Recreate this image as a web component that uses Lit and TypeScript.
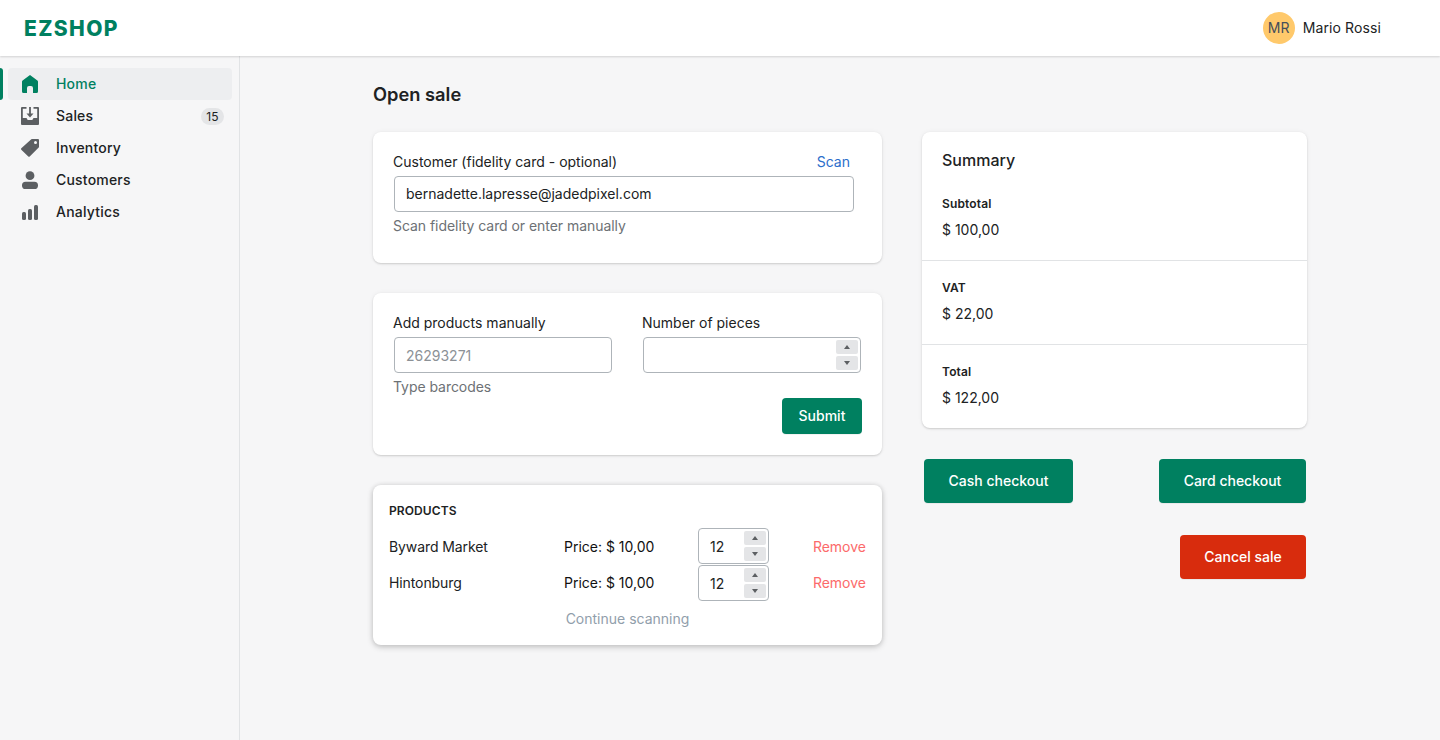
import { LitElement, css, html, svg } from "lit";
import { customElement } from "lit/decorators.js";

const NAV = [
  {
    label: "Home",
    active: true,
    icon: svg`<path d="M10 1 2.6 6.5A1.5 1.5 0 0 0 2 7.7v9.8A1.5 1.5 0 0 0 3.5 19H7v-5a2 2 0 0 1 2-2h2a2 2 0 0 1 2 2v5h3.5a1.5 1.5 0 0 0 1.5-1.5V7.7a1.5 1.5 0 0 0-.6-1.2L10 1z"/>`,
  },
  {
    label: "Sales",
    badge: "15",
    icon: svg`<path d="M2 1h4.5v1.8H2.8V12h3.7l1.2 2h4.6l1.2-2h3.7V2.800h-3.700V1H18a1 1 0 0 1 1 1v16a1 1 0 0 1-1 1H2a1 1 0 0 1-1-1V2a1 1 0 0 1 1-1z"/><path d="M9.100 1h1.800v6.500h2.600L10 11.500 6.500 7.500h2.600V1z"/>`,
  },
  {
    label: "Inventory",
    icon: svg`<path fill-rule="evenodd" d="M18 1h-6a1 1 0 0 0-.7.3l-10 9a1 1 0 0 0 0 1.4l7 6.7a1 1 0 0 0 1.400 0l9-9a1 1 0 0 0 .3-.7V2a1 1 0 0 0-1-1zm-2.500 5a1.500 1.500 0 1 1 0-3 1.500 1.500 0 0 1 0 3z"/>`,
  },
  {
    label: "Customers",
    icon: svg`<circle cx="10" cy="5.7" r="4.4"/><rect x="2" y="11.7" width="16" height="7.3" rx="3.6"/>`,
  },
  {
    label: "Analytics",
    icon: svg`<rect x="2" y="10" width="4" height="8" rx="1.5"/><rect x="8" y="7" width="4" height="11" rx="1.5"/><rect x="14" y="3" width="4" height="15" rx="1.5"/>`,
  },
];

const PRODUCTS = [
  { name: "Byward Market", price: "Price: $ 10,00", qty: "12" },
  { name: "Hintonburg", price: "Price: $ 10,00", qty: "12" },
];

const SUMMARY = [
  { label: "Subtotal", value: "$ 100,00" },
  { label: "VAT", value: "$ 22,00" },
  { label: "Total", value: "$ 122,00" },
];

@customElement("app-root")
class AppRoot extends LitElement {
  static styles = css`
    :host {
      display: block;
      height: 740px;
      overflow: hidden;
      background: #f6f6f7;
      color: #202223;
      font-family: Inter, "Liberation Sans", sans-serif;
      font-size: 14px;
      line-height: 20px;
    }
    * {
      box-sizing: border-box;
    }
    .topbar {
      position: relative;
      z-index: 1;
      height: 56px;
      display: flex;
      align-items: center;
      justify-content: space-between;
      padding: 0 59px 0 24px;
      background: #fff;
      box-shadow: 0 1px 2px rgba(0, 0, 0, 0.15);
    }
    .logo {
      padding-top: 2px;
      color: #008060;
      font-size: 21px;
      font-weight: 800;
      letter-spacing: 1.4px;
    }
    .user {
      display: flex;
      align-items: center;
      gap: 8px;
      letter-spacing: 0.1px;
    }
    .avatar {
      width: 32px;
      height: 32px;
      border-radius: 50%;
      background: #ffc96b;
      display: flex;
      align-items: center;
      justify-content: center;
      color: #454f5b;
    }
    .body {
      display: flex;
      height: 684px;
    }
    .sidebar {
      width: 240px;
      flex: none;
      padding: 12px 7px 12px 8px;
      border-right: 1px solid #e1e3e5;
    }
    .nav-item {
      position: relative;
      height: 32px;
      display: flex;
      align-items: center;
      gap: 16px;
      padding: 0 8px 0 12px;
      border-radius: 4px;
      font-weight: 500;
      letter-spacing: 0.2px;
    }
    .nav-item svg {
      width: 20px;
      height: 20px;
      fill: #5c5f62;
      flex: none;
    }
    .nav-item.active {
      background: #edeef0;
      color: #008060;
    }
    .nav-item.active svg {
      fill: #008060;
    }
    .nav-item.active::before {
      content: "";
      position: absolute;
      left: -8px;
      top: 0;
      bottom: 0;
      width: 3px;
      background: #008060;
      border-radius: 0 3px 3px 0;
    }
    .badge {
      margin-left: auto;
      height: 17px;
      padding: 0 5.5px;
      border-radius: 9px;
      background: #e4e5e7;
      font-size: 12px;
      font-weight: 400;
      line-height: 17px;
      letter-spacing: 0;
    }
    .main {
      flex: 1;
      padding: 24px 0 0 133px;
    }
    h1 {
      margin: 0 0 24px;
      font-size: 18.3px;
      font-weight: 600;
      line-height: 28px;
    }
    .columns {
      display: flex;
      gap: 40px;
      align-items: flex-start;
    }
    .left {
      width: 509px;
      display: flex;
      flex-direction: column;
      gap: 30px;
    }
    .right {
      width: 385px;
    }
    .card {
      background: #fff;
      border-radius: 8px;
      box-shadow: 0 0 5px rgba(23, 24, 24, 0.05), 0 1px 2px rgba(0, 0, 0, 0.15);
    }
    .customer {
      height: 131px;
      padding: 20px 28px 0 20px;
    }
    .customer input {
      padding-bottom: 2px;
    }
    .label-row {
      display: flex;
      justify-content: space-between;
      padding-right: 4px;
    }
    .scan {
      color: #2c6ecb;
    }
    .control {
      position: relative;
      display: block;
      margin: 4px 0 0 1px;
    }
    input {
      display: block;
      width: 100%;
      height: 36px;
      padding: 0 11px;
      border: 1px solid #aeb4b9;
      border-radius: 4px;
      background: #fff;
      color: #202223;
      font: inherit;
      outline: none;
    }
    input::placeholder {
      color: #8c9196;
    }
    .help {
      margin-top: 4px;
      color: #6d7175;
      letter-spacing: -0.05px;
    }
    .spin {
      position: absolute;
      top: 3px;
      right: 3px;
      width: 22px;
      display: flex;
      flex-direction: column;
      gap: 2px;
    }
    .spin span {
      height: 14px;
      display: flex;
      align-items: center;
      justify-content: center;
      background: #e4e5e7;
      border-radius: 2px;
    }
    .spin i {
      width: 0;
      height: 0;
      border-left: 3.5px solid transparent;
      border-right: 3.5px solid transparent;
    }
    .spin .up i {
      border-bottom: 4px solid #5c5f62;
    }
    .spin .down i {
      border-top: 4px solid #5c5f62;
    }
    .manual {
      height: 162px;
      padding: 20px 20px 0;
    }
    .fields {
      display: grid;
      grid-template-columns: 219px 219px;
      gap: 30px;
    }
    .submit-row {
      display: flex;
      justify-content: flex-end;
      margin-top: 1px;
    }
    button {
      border: 0;
      border-radius: 4px;
      background: #008060;
      color: #fff;
      font: inherit;
      font-weight: 450;
      box-shadow: 0 1px 0 rgba(0, 0, 0, 0.05);
    }
    .submit {
      width: 80px;
      height: 36px;
    }
    .products {
      height: 160px;
      padding: 17px 16px 16px;
      box-shadow: 0 0 5px rgba(23, 24, 24, 0.08), 0 2px 6px rgba(0, 0, 0, 0.2);
    }
    .products h2 {
      margin: 0 0 8px;
      font-size: 12px;
      font-weight: 600;
      line-height: 18px;
      letter-spacing: 0.1px;
    }
    .rows {
      display: flex;
      flex-direction: column;
      gap: 1px;
    }
    .row {
      display: grid;
      grid-template-columns: 175px 134px 71px 1fr;
      align-items: center;
      height: 36px;
    }
    .row:first-child > span {
      margin-top: 2px;
    }
    .row .control {
      margin: 0;
    }
    .name {
      letter-spacing: -0.1px;
    }
    .price {
      color: #111;
    }
    .remove {
      color: #fc6a6a;
      text-align: right;
    }
    .continue {
      margin-top: 8px;
      color: #919eab;
      text-align: center;
    }
    .summary h2 {
      margin: 0;
      padding: 16px 20px 4px;
      font-size: 16px;
      font-weight: 500;
      line-height: 24px;
    }
    .section {
      height: 84px;
      padding: 20px 20px 0;
    }
    .section + .section {
      padding-top: 19px;
      border-top: 1px solid #e1e3e5;
    }
    .section h3 {
      margin: 0 0 8px;
      font-size: 12px;
      font-weight: 600;
      line-height: 16px;
      letter-spacing: 0.15px;
    }
    .checkout {
      display: flex;
      justify-content: space-between;
      margin-top: 31px;
      padding: 0 1px 0 2px;
    }
    .checkout button,
    .cancel-row button {
      height: 44px;
    }
    .cash {
      width: 149px;
    }
    .card-pay {
      width: 147px;
    }
    .cancel-row {
      display: flex;
      justify-content: flex-end;
      margin-top: 32px;
      padding-right: 1px;
    }
    .cancel {
      width: 126px;
      background: #d82c0d;
    }
  `;

  renderNumber(value: string) {
    return html`<label class="control">
      <input .value=${value} />
      <div class="spin">
        <span class="up"><i></i></span>
        <span class="down"><i></i></span>
      </div>
    </label>`;
  }

  render() {
    return html`
      <header class="topbar">
        <div class="logo">EZSHOP</div>
        <div class="user">
          <div class="avatar">MR</div>
          <span>Mario Rossi</span>
        </div>
      </header>
      <div class="body">
        <nav class="sidebar">
          ${NAV.map(
            (item) => html`
              <div class="nav-item ${item.active ? "active" : ""}">
                <svg viewBox="0 0 20 20">${item.icon}</svg>
                <span>${item.label}</span>
                ${item.badge ? html`<span class="badge">${item.badge}</span>` : ""}
              </div>
            `
          )}
        </nav>
        <main class="main">
          <h1>Open sale</h1>
          <div class="columns">
            <div class="left">
              <section class="card customer">
                <div class="label-row">
                  <span>Customer (fidelity card - optional)</span>
                  <span class="scan">Scan</span>
                </div>
                <div class="control">
                  <input .value=${"bernadette.lapresse@jadedpixel.com"} />
                </div>
                <div class="help">Scan fidelity card or enter manually</div>
              </section>

              <section class="card manual">
                <div class="fields">
                  <div>
                    <div>Add products manually</div>
                    <div class="control"><input placeholder="26293271" /></div>
                    <div class="help">Type barcodes</div>
                  </div>
                  <div>
                    <div>Number of pieces</div>
                    ${this.renderNumber("")}
                  </div>
                </div>
                <div class="submit-row">
                  <button class="submit">Submit</button>
                </div>
              </section>

              <section class="card products">
                <h2>PRODUCTS</h2>
                <div class="rows">
                  ${PRODUCTS.map(
                    (p) => html`
                      <div class="row">
                        <span class="name">${p.name}</span>
                        <span class="price">${p.price}</span>
                        ${this.renderNumber(p.qty)}
                        <span class="remove">Remove</span>
                      </div>
                    `
                  )}
                </div>
                <div class="continue">Continue scanning</div>
              </section>
            </div>

            <div class="right">
              <section class="card summary">
                <h2>Summary</h2>
                ${SUMMARY.map(
                  (s) => html`
                    <div class="section">
                      <h3>${s.label}</h3>
                      <div>${s.value}</div>
                    </div>
                  `
                )}
              </section>
              <div class="checkout">
                <button class="cash">Cash checkout</button>
                <button class="card-pay">Card checkout</button>
              </div>
              <div class="cancel-row">
                <button class="cancel">Cancel sale</button>
              </div>
            </div>
          </div>
        </main>
      </div>
    `;
  }
}
